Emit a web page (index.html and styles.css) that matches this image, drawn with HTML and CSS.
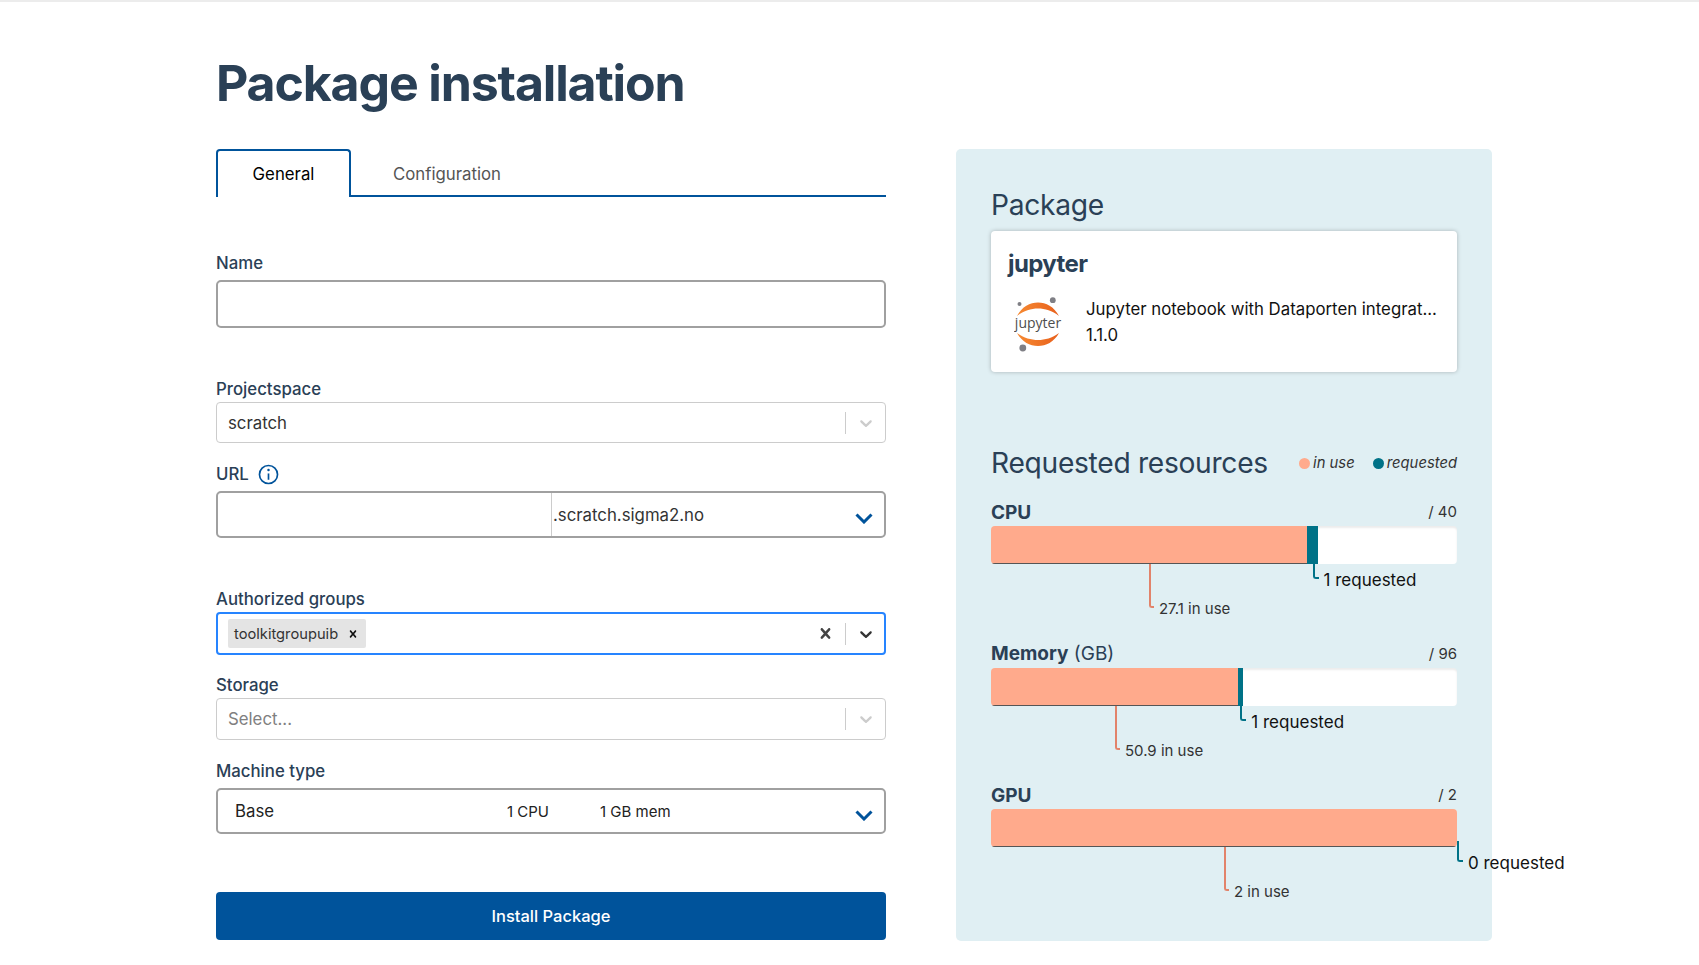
FILE: index.html
```html
<!DOCTYPE html>
<html lang="en">
<head>
    <meta charset="UTF-8">
    <meta name="viewport" content="width=device-width, initial-scale=1.0">
    <title>Package installation</title>
    <link rel="stylesheet" href="styles.css">
</head>
<body>
    <main class="page">
        <h1>Package installation</h1>
        <div class="columns">
            <form class="install-form">
                <div class="tabs">
                    <div class="tab tab-active">General</div>
                    <div class="tab">Configuration</div>
                </div>

                <div class="field field-name">
                    <label class="text-label">Name</label>
                    <div class="box"></div>
                </div>

                <div class="field">
                    <label class="select-label">Projectspace</label>
                    <div class="select select-disabled">
                        <span class="select-value">scratch</span>
                        <span class="select-sep"></span>
                        <svg class="select-arrow" viewBox="0 0 20 20"><path d="M4.516 7.548c0.436-0.446 1.043-0.481 1.576 0l3.908 3.747 3.908-3.747c0.533-0.481 1.141-0.446 1.574 0 0.436 0.445 0.408 1.197 0 1.615-0.406 0.418-4.695 4.502-4.695 4.502-0.217 0.223-0.502 0.335-0.787 0.335s-0.57-0.112-0.789-0.335c0 0-4.287-4.084-4.695-4.502s-0.436-1.17 0-1.615z"/></svg>
                    </div>
                </div>

                <div class="field field-url">
                    <label class="text-label">URL
                        <svg class="info-icon" viewBox="0 0 20 20">
                            <circle cx="10" cy="10" r="8.6"/>
                            <path d="M10 9v6"/>
                            <circle class="info-dot" cx="10" cy="5.8" r="1.2"/>
                        </svg>
                    </label>
                    <div class="box box-url">
                        <div class="url-name"></div>
                        <div class="url-domain">.scratch.sigma2.no</div>
                        <svg class="blue-arrow" viewBox="0 0 18 11"><path d="M1.5 1.5 9 9l7.500-7.500"/></svg>
                    </div>
                </div>

                <div class="field field-groups">
                    <label class="select-label">Authorized groups</label>
                    <div class="select select-focus">
                        <span class="tag">toolkitgroupuib
                            <svg class="tag-remove" viewBox="0 0 20 20"><path d="M14.348 14.849c-0.469 0.469-1.229 0.469-1.697 0l-2.651-3.030-2.651 3.029c-0.469 0.469-1.229 0.469-1.697 0-0.469-0.469-0.469-1.229 0-1.697l2.758-3.15-2.759-3.152c-0.469-0.469-0.469-1.228 0-1.697s1.228-0.469 1.697 0l2.652 3.031 2.651-3.031c0.469-0.469 1.228-0.469 1.697 0s0.469 1.229 0 1.697l-2.758 3.152 2.758 3.15c0.469 0.469 0.469 1.229 0 1.698z"/></svg>
                        </span>
                        <svg class="select-clear" viewBox="0 0 20 20"><path d="M14.348 14.849c-0.469 0.469-1.229 0.469-1.697 0l-2.651-3.030-2.651 3.029c-0.469 0.469-1.229 0.469-1.697 0-0.469-0.469-0.469-1.229 0-1.697l2.758-3.15-2.759-3.152c-0.469-0.469-0.469-1.228 0-1.697s1.228-0.469 1.697 0l2.652 3.031 2.651-3.031c0.469-0.469 1.228-0.469 1.697 0s0.469 1.229 0 1.697l-2.758 3.152 2.758 3.15c0.469 0.469 0.469 1.229 0 1.698z"/></svg>
                        <span class="select-sep"></span>
                        <svg class="select-arrow" viewBox="0 0 20 20"><path d="M4.516 7.548c0.436-0.446 1.043-0.481 1.576 0l3.908 3.747 3.908-3.747c0.533-0.481 1.141-0.446 1.574 0 0.436 0.445 0.408 1.197 0 1.615-0.406 0.418-4.695 4.502-4.695 4.502-0.217 0.223-0.502 0.335-0.787 0.335s-0.57-0.112-0.789-0.335c0 0-4.287-4.084-4.695-4.502s-0.436-1.17 0-1.615z"/></svg>
                    </div>
                </div>

                <div class="field">
                    <label class="select-label">Storage</label>
                    <div class="select select-disabled select-storage">
                        <span class="select-value select-placeholder">Select...</span>
                        <span class="select-sep"></span>
                        <svg class="select-arrow" viewBox="0 0 20 20"><path d="M4.516 7.548c0.436-0.446 1.043-0.481 1.576 0l3.908 3.747 3.908-3.747c0.533-0.481 1.141-0.446 1.574 0 0.436 0.445 0.408 1.197 0 1.615-0.406 0.418-4.695 4.502-4.695 4.502-0.217 0.223-0.502 0.335-0.787 0.335s-0.57-0.112-0.789-0.335c0 0-4.287-4.084-4.695-4.502s-0.436-1.17 0-1.615z"/></svg>
                    </div>
                </div>

                <div class="field field-machine">
                    <label class="text-label">Machine type</label>
                    <div class="box box-machine">
                        <span class="machine-name">Base</span>
                        <span class="machine-cpu">1 CPU</span>
                        <span class="machine-mem">1 GB mem</span>
                        <svg class="blue-arrow" viewBox="0 0 18 11"><path d="M1.5 1.5 9 9l7.500-7.500"/></svg>
                    </div>
                </div>

                <button type="button" class="install-button">Install Package</button>
            </form>

            <aside class="panel">
                <h2 class="panel-title">Package</h2>
                <div class="card">
                    <h3>jupyter</h3>
                    <div class="card-body">
                        <svg class="logo" viewBox="0 0 50 58">
                            <defs>
                                <linearGradient id="jupyterOrange" x1="0" y1="0" x2="1" y2="0">
                                    <stop offset="0" stop-color="#f68a32"/>
                                    <stop offset="1" stop-color="#e8601c"/>
                                </linearGradient>
                            </defs>
                            <circle class="logo-dot" cx="5.500" cy="7" r="2"/>
                            <circle class="logo-dot" cx="38.800" cy="3.200" r="2.900"/>
                            <circle class="logo-dot" cx="8.800" cy="51" r="3.400"/>
                            <path class="logo-arc" d="M3 19C8 9.500 16 5.500 24 5.500S40 9.500 45 19C38 13.500 31 11.500 24 11.500S10 13.500 3 19Z"/>
                            <path class="logo-arc" d="M3 36C8 45 16 49 24 49S40 45 45 36C38 41 31 43 24 43S10 41 3 36Z"/>
                            <text class="logo-text" x="24" y="31" text-anchor="middle">jupyter</text>
                        </svg>
                        <div class="card-text">
                            <div>Jupyter notebook with Dataporten integrat...</div>
                            <div>1.1.0</div>
                        </div>
                    </div>
                </div>

                <div class="resources-head">
                    <h2 class="panel-title">Requested resources</h2>
                    <div class="legend">
                        <span class="legend-item"><i class="dot dot-use"></i>in use</span>
                        <span class="legend-item legend-req"><i class="dot dot-req"></i>requested</span>
                    </div>
                </div>

                <div class="resource">
                    <div class="resource-head">
                        <span class="resource-name"><b>CPU</b></span>
                        <span class="resource-max">/ 40</span>
                    </div>
                    <div class="bar-wrap">
                        <div class="bar">
                            <div class="bar-use" style="width: 67.75%"></div>
                            <div class="bar-req" style="width: 2.5%"></div>
                        </div>
                        <div class="callout callout-use" style="left: 33.9%"><span class="callout-line"></span><span class="callout-text">27.1 in use</span></div>
                        <div class="callout callout-req" style="left: 69%"><span class="callout-line"></span><span class="callout-text">1 requested</span></div>
                    </div>
                </div>

                <div class="resource">
                    <div class="resource-head">
                        <span class="resource-name"><b>Memory</b> (GB)</span>
                        <span class="resource-max">/ 96</span>
                    </div>
                    <div class="bar-wrap">
                        <div class="bar">
                            <div class="bar-use" style="width: 53%"></div>
                            <div class="bar-req" style="width: 1.04%"></div>
                        </div>
                        <div class="callout callout-use" style="left: 26.6%"><span class="callout-line"></span><span class="callout-text">50.9 in use</span></div>
                        <div class="callout callout-req" style="left: 53.5%"><span class="callout-line"></span><span class="callout-text">1 requested</span></div>
                    </div>
                </div>

                <div class="resource">
                    <div class="resource-head">
                        <span class="resource-name"><b>GPU</b></span>
                        <span class="resource-max">/ 2</span>
                    </div>
                    <div class="bar-wrap">
                        <div class="bar">
                            <div class="bar-use" style="width: 100%"></div>
                        </div>
                        <div class="callout callout-use" style="left: 50%"><span class="callout-line"></span><span class="callout-text">2 in use</span></div>
                        <div class="callout callout-req callout-zero" style="left: 100%"><span class="callout-line"></span><span class="callout-text">0 requested</span></div>
                    </div>
                </div>
            </aside>
        </div>
    </main>
</body>
</html>
```

FILE: styles.css
```css
* {
    box-sizing: border-box;
}

body {
    margin: 0;
    border-top: 2px solid #ececec;
    background-color: #fff;
    color: #000;
    font-family: Inter, "Liberation Sans", sans-serif;
    font-size: 16.8px;
}

.page {
    padding: 50px 0 0 216px;
}

h1 {
    margin: 0 0 35px;
    color: #2a4056;
    font-size: 50px;
    font-weight: 700;
    line-height: 62px;
    letter-spacing: -1.15px;
}

.columns {
    display: grid;
    grid-template-columns: 670px 536px;
    column-gap: 70px;
}

/* tabs */
.tabs {
    display: flex;
    height: 48px;
    border-bottom: 2px solid #00539b;
    margin-bottom: 56px;
}

.tab {
    padding: 15px 0 0 42px;
    color: #555;
    line-height: 20px;
}

.tab-active {
    width: 135px;
    height: 48px;
    padding: 13px 0 0;
    border: 2px solid #00539b;
    border-bottom: none;
    border-radius: 4px 4px 0 0;
    background-color: #fff;
    color: #000;
    text-align: center;
}

/* form fields */
.field {
    margin-bottom: 21px;
}

.field-name {
    margin-bottom: 51px;
}

.field-url {
    margin-bottom: 51px;
}

.field-groups {
    margin-bottom: 20px;
}

.field-machine {
    margin-bottom: 58px;
}

label {
    display: flex;
    align-items: center;
    height: 20px;
    color: #2a4056;
    font-weight: 500;
}

.text-label {
    margin-bottom: 7px;
}

.select-label {
    margin-bottom: 3px;
}

.info-icon {
    width: 21px;
    height: 21px;
    margin-left: 9px;
    fill: none;
    stroke: #00539b;
    stroke-width: 1.6;
}

.info-dot {
    fill: #00539b;
    stroke: none;
}

.box {
    display: flex;
    align-items: center;
    position: relative;
    height: 48px;
    border: 2px solid #a0a0a0;
    border-radius: 5px;
}

.box-url {
    height: 47px;
}

.url-name {
    width: 334px;
    height: 100%;
    border-right: 1px solid #ccc;
}

.url-domain {
    padding: 1px 0 0 1px;
    color: #333;
}

.blue-arrow {
    position: absolute;
    right: 11px;
    top: 20px;
    width: 18px;
    height: 11px;
    fill: none;
    stroke: #00539b;
    stroke-width: 3;
}

.box-machine {
    height: 46px;
    color: #222;
}

.machine-name {
    width: 289px;
    padding-left: 17px;
}

.machine-cpu {
    width: 93px;
    font-size: 15px;
}

.machine-mem {
    font-size: 15px;
}

.select {
    display: flex;
    align-items: center;
    height: 41px;
    padding-left: 11px;
    border: 1px solid #ccc;
    border-radius: 4px;
}

.select-storage {
    height: 42px;
}

.select-focus {
    height: 43px;
    border: 2px solid #2684ff;
    padding-left: 10px;
}

.select-value {
    flex: 1;
    color: #333;
}

.select-placeholder {
    color: #808080;
}

.select-sep {
    width: 1px;
    height: 22px;
    background-color: #ccc;
}

.select-arrow {
    width: 20px;
    height: 20px;
    margin: 0 9px 0 10px;
    fill: #333;
}

.select-focus .select-arrow {
    margin-right: 8px;
}

.select-disabled .select-arrow {
    fill: #ccc;
}

.select-clear {
    width: 21px;
    height: 21px;
    margin: 0 9px 0 auto;
    fill: #444;
}

.tag {
    display: flex;
    align-items: center;
    height: 29px;
    padding-left: 6px;
    background-color: #e4e4e4;
    border-radius: 2px;
    color: #333;
    font-size: 14.7px;
}

.tag-remove {
    width: 14px;
    height: 14px;
    margin: 0 6px 0 8px;
    fill: #111;
}

.install-button {
    display: block;
    width: 100%;
    height: 48px;
    border: none;
    border-radius: 4px;
    background-color: #00539b;
    color: #fff;
    font-family: inherit;
    font-size: 16.5px;
    font-weight: 500;
}

/* right panel */
.panel {
    height: 792px;
    padding: 38px 35px 0;
    border-radius: 5px;
    background-color: #e0eff3;
}

.panel-title {
    margin: 0;
    color: #2a4056;
    font-size: 28.2px;
    font-weight: 400;
    line-height: 36px;
    letter-spacing: -0.3px;
}

.card {
    height: 141px;
    margin: 8px 0 73px;
    padding: 18px 17px 0;
    border-radius: 4px;
    background-color: #fff;
    box-shadow: 0 0 4px rgba(0, 0, 0, 0.25);
}

.card h3 {
    margin: 0;
    color: #2a4056;
    font-size: 24px;
    font-weight: 700;
    line-height: 30px;
    letter-spacing: -0.6px;
}

.card-body {
    display: flex;
    align-items: center;
    margin-top: 17px;
}

.logo {
    flex: none;
    width: 50px;
    height: 58px;
    margin: 0 22px 0 6px;
}

.logo-dot {
    fill: #7f7f85;
}

.logo-arc {
    fill: url(#jupyterOrange);
}

.logo-text {
    fill: #4e4e4e;
    font-family: "Open Sans", sans-serif;
    font-size: 14px;
}

.card-text {
    margin-bottom: 8px;
    color: #111;
    line-height: 26px;
}

.resources-head {
    display: flex;
    justify-content: space-between;
    align-items: center;
    margin-bottom: 19px;
}

.legend {
    display: flex;
    color: #333;
    font-size: 14.8px;
    font-style: italic;
}

.legend-item {
    display: flex;
    align-items: center;
}

.legend-req {
    margin-left: 18px;
}

.dot {
    width: 11px;
    height: 11px;
    margin-right: 3px;
    border-radius: 50%;
}

.dot-use {
    background-color: #ffaa8c;
}

.dot-req {
    background-color: #007287;
}

.resource {
    margin-bottom: 77.6px;
}

.resource-head {
    display: flex;
    justify-content: space-between;
    align-items: center;
    height: 24px;
    margin-bottom: 2px;
}

.resource-name {
    color: #2a4056;
    font-size: 19px;
}

.resource-name b {
    font-weight: 700;
}

.resource-max {
    padding-bottom: 1px;
    color: #333;
    font-size: 15px;
}

.bar-wrap {
    position: relative;
}

.bar {
    display: flex;
    height: 38px;
    overflow: hidden;
    border-radius: 4px;
    background-color: #fff;
    box-shadow: inset 0 2px 2px rgba(0, 0, 0, 0.08);
}

.bar-use {
    background-color: #ffaa8c;
    border-bottom: 1px solid #555;
}

.bar-req {
    background-color: #007287;
}

.callout {
    display: flex;
    position: absolute;
    top: 100%;
}

.callout-line {
    width: 6px;
    height: 15px;
    border-left: 2px solid #007287;
    border-bottom: 2px solid #007287;
    border-bottom-left-radius: 3px;
}

.callout-text {
    align-self: flex-end;
    height: 0;
    margin-left: 5px;
    line-height: 0;
    transform: translateY(1px);
    white-space: nowrap;
}

.callout-req .callout-text {
    color: #111;
    font-size: 17px;
}

.callout-use .callout-line {
    width: 5px;
    height: 44px;
    border-color: #e2836a;
}

.callout-use .callout-text {
    color: #333;
    font-size: 15px;
}

.callout-zero {
    top: calc(100% - 6px);
}

.callout-zero .callout-line {
    height: 21px;
}
```
